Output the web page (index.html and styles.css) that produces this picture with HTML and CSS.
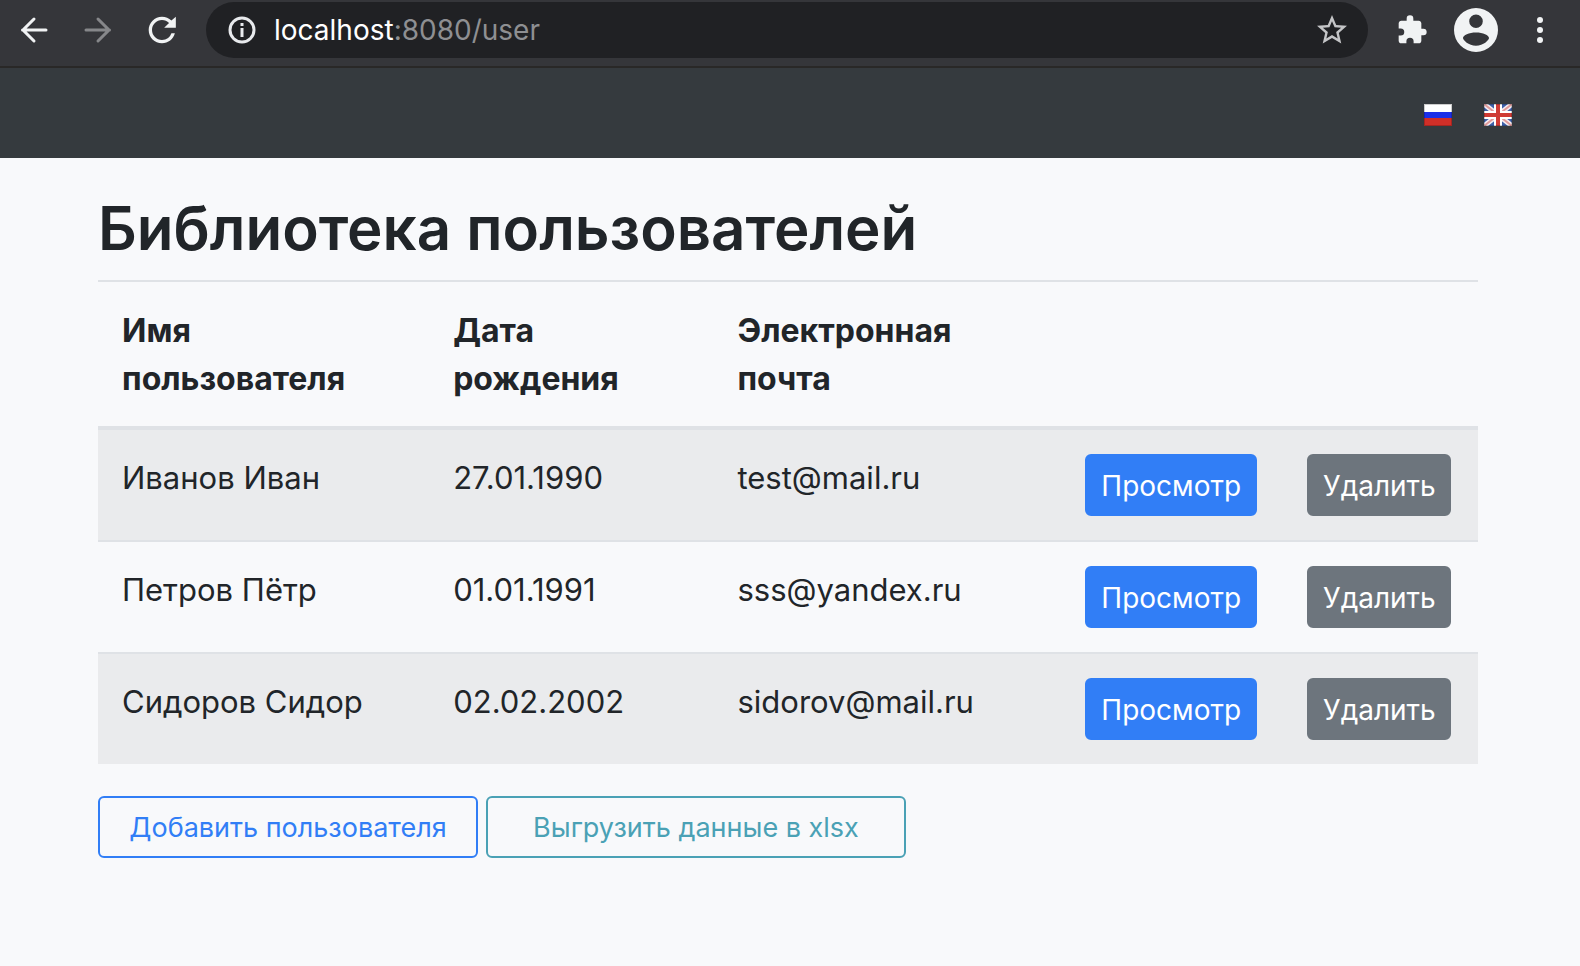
FILE: index.html
```html
<!DOCTYPE html>
<html lang="ru">
<head>
<meta charset="utf-8">
<title>Библиотека пользователей</title>
<link rel="stylesheet" href="styles.css">
</head>
<body>
<header class="toolbar">
  <div class="tools">
    <button class="tool" type="button" aria-label="Назад">
      <svg width="28" height="28" viewBox="0 0 28 28"><path class="line" d="M26 14H2.500M14 3L3 14l11 11"/></svg>
    </button>
    <button class="tool tool-off" type="button" aria-label="Вперёд">
      <svg width="28" height="28" viewBox="0 0 28 28"><path class="line" d="M2 14h23.500M14 3l11 11-11 11"/></svg>
    </button>
    <button class="tool" type="button" aria-label="Обновить">
      <svg width="40" height="40" viewBox="0 0 24 24"><path d="M17.650 6.350A7.960 7.960 0 0 0 12 4c-4.420 0-7.990 3.580-7.990 8s3.570 8 7.990 8c3.730 0 6.840-2.550 7.730-6h-2.080A5.990 5.990 0 0 1 12 18c-3.310 0-6-2.690-6-6s2.690-6 6-6c1.660 0 3.140.69 4.220 1.780L13.300 10.700h7V4l-2.650 2.350z"/></svg>
    </button>
  </div>
  <div class="omnibox">
    <svg width="28" height="28" viewBox="0 0 28 28" aria-hidden="true"><circle class="ring" cx="14" cy="14" r="12"/><path d="M12.500 7h3v3h-3zM12.500 12h3v9h-3z"/></svg>
    <div class="url">localhost<span class="url-rest">:8080/user</span></div>
    <button class="star" type="button" aria-label="В закладки">
      <svg width="36" height="36" viewBox="0 0 24 24"><path d="M22 9.240l-7.190-.62L12 2 9.190 8.630 2 9.240l5.460 4.730L5.820 21 12 17.270 18.180 21l-1.630-7.030L22 9.240zM12 15.400l-3.760 2.270 1-4.280-3.320-2.880 4.380-.38L12 6.100l1.710 4.040 4.380.38-3.320 2.880 1 4.280L12 15.400z"/></svg>
    </button>
  </div>
  <div class="tools">
    <button class="tool" type="button" aria-label="Расширения">
      <svg width="32" height="32" viewBox="0 0 24 24"><path d="M20.500 11H19V7c0-1.100-.9-2-2-2h-4V3.500a2.500 2.500 0 0 0-5 0V5H4c-1.100 0-1.990.9-1.990 2v3.800H3.500a2.700 2.700 0 0 1 0 5.400H2V20c0 1.100.9 2 2 2h3.800v-1.500a2.700 2.700 0 0 1 5.400 0V22H17c1.100 0 2-.9 2-2v-4h1.500a2.500 2.500 0 0 0 0-5z"/></svg>
    </button>
    <button class="tool" type="button" aria-label="Профиль">
      <svg width="44" height="44" viewBox="0 0 44 44"><path fill-rule="evenodd" d="M22 0a22 22 0 1 0 0 44 22 22 0 0 0 0-44zM22 6.500a6.800 6.800 0 1 1 0 13.600 6.800 6.800 0 0 1 0-13.600zM22 24.500c7 0 13 2.500 13 5.500 0 2-5.500 7.800-13 7.800S9 32 9 30c0-3 6-5.500 13-5.500z"/></svg>
    </button>
    <button class="tool" type="button" aria-label="Меню">
      <svg width="28" height="28" viewBox="0 0 28 28"><circle cx="14" cy="4" r="3"/><circle cx="14" cy="14" r="3"/><circle cx="14" cy="24" r="3"/></svg>
    </button>
  </div>
</header>

<nav class="navbar">
  <a class="flag" href="?lang=ru" aria-label="Русский">
    <svg width="28" height="22" viewBox="0 0 28 22"><path fill="#fff" d="M0 0h28v8H0z"/><path fill="#1b2fe8" d="M0 8h28v6H0z"/><path fill="#d02f28" d="M0 14h28v8H0z"/><path fill="none" stroke="#000" stroke-opacity=".2" stroke-width="2" d="M0 0h28v22H0z"/></svg>
  </a>
  <a class="flag" href="?lang=en" aria-label="English">
    <svg width="28" height="22" viewBox="0 0 28 22"><path fill="#3c5fa8" d="M0 0h28v22H0z"/><path stroke="#f4eef2" stroke-width="5" d="M0 0l28 22M28 0L0 22"/><path stroke="#e09a9a" stroke-width="2" d="M0 0l28 22M28 0L0 22"/><path stroke="#fff" stroke-width="8" d="M14 0v22M0 11h28"/><path stroke="#cf3b35" stroke-width="4" d="M14 0v22M0 11h28"/><path fill="none" stroke="#000" stroke-opacity=".2" stroke-width="2" d="M0 0h28v22H0z"/></svg>
  </a>
</nav>

<main class="container">
  <h1 class="title">Библиотека пользователей</h1>
  <table class="users">
    <colgroup><col class="col-name"><col class="col-date"><col class="col-mail"><col class="col-view"><col class="col-drop"></colgroup>
    <thead>
      <tr><th scope="col">Имя<br>пользователя</th><th scope="col">Дата<br>рождения</th><th scope="col">Электронная<br>почта</th><td></td><td></td></tr>
    </thead>
    <tbody>
      <tr><td>Иванов Иван</td><td>27.01.1990</td><td>test@mail.ru</td><td><button class="btn btn-primary" type="button">Просмотр</button></td><td><button class="btn btn-secondary" type="button">Удалить</button></td></tr>
      <tr><td>Петров Пётр</td><td>01.01.1991</td><td>sss@yandex.ru</td><td><button class="btn btn-primary" type="button">Просмотр</button></td><td><button class="btn btn-secondary" type="button">Удалить</button></td></tr>
      <tr><td>Сидоров Сидор</td><td>02.02.2002</td><td>sidorov@mail.ru</td><td><button class="btn btn-primary" type="button">Просмотр</button></td><td><button class="btn btn-secondary" type="button">Удалить</button></td></tr>
    </tbody>
  </table>
  <div class="actions">
    <button class="btn btn-add" type="button">Добавить пользователя</button>
    <button class="btn btn-export" type="button">Выгрузить данные в xlsx</button>
  </div>
</main>
</body>
</html>
```
FILE: styles.css
```css
* { box-sizing: border-box; }

body {
  margin: 0;
  background: #f8f9fb;
  color: #212529;
  font-family: Inter, "Liberation Sans", sans-serif;
  font-size: 31px;
  line-height: 48px;
}

button { font: inherit; cursor: pointer; }
svg { display: block; }

.toolbar {
  display: flex;
  gap: 12px;
  padding: 2px 8px 8px 2px;
  background: #35363a;
  border-bottom: 2px solid #292827;
}

.tools { display: flex; }

.tool, .star {
  display: flex;
  align-items: center;
  justify-content: center;
  padding: 0;
  border: 0;
  background: none;
  fill: #f1f3f4;
  stroke: none;
}

.tool { width: 64px; height: 56px; }
.line { fill: none; stroke: #f1f3f4; stroke-width: 3; stroke-linecap: round; }
.tool-off .line { stroke: #86878a; }

.omnibox {
  flex: 1;
  display: flex;
  align-items: center;
  gap: 18px;
  height: 56px;
  padding: 0 18px 0 22px;
  border-radius: 28px;
  background: #202124;
  fill: #e8eaed;
}

.ring { fill: none; stroke: #e8eaed; stroke-width: 3; }
.url { flex: 1; color: #fff; font-size: 28px; }
.url-rest { color: #8e8f92; }
.star { fill: #c4c5c7; }

.navbar {
  display: flex;
  align-items: center;
  justify-content: flex-end;
  gap: 32px;
  height: 90px;
  padding: 4px 68px 0;
  background: #353a3e;
}

.container { padding: 32px 102px 32px 98px; }

.title {
  margin: 0 0 14px;
  font-size: 60px;
  font-weight: 600;
  line-height: 76px;
}

.users {
  width: 100%;
  table-layout: fixed;
  border-spacing: 0;
}

.col-name { width: 24%; }
.col-date { width: 20.6%; }
.col-mail { width: 25.2%; }
.col-view { width: 16.1%; }
.col-drop { width: 14.1%; }

.users th, .users td {
  padding: 24px;
  border-top: 2px solid #dfe2e6;
  text-align: left;
  vertical-align: top;
  white-space: nowrap;
}

.users thead th, .users thead td { border-bottom: 4px solid #dfe2e6; }
.users th { padding: 25px 24px 23px; font-size: 32px; font-weight: 700; }
.users tbody tr:first-child td { border-top: 0; }
.users tbody tr:nth-child(odd) { background: #eaebed; }

.btn {
  display: block;
  height: 62px;
  padding: 2px 0 0;
  border: 2px solid;
  border-radius: 6px;
  background: none;
  font-size: 28px;
  line-height: 42px;
  white-space: nowrap;
}

.btn-primary { width: 172px; border-color: #317ef6; background: #317ef6; color: #fff; }
.btn-secondary { width: 144px; border-color: #6d757d; background: #6d757d; color: #fff; }
.btn-add { width: 380px; border-color: #317ef6; color: #317ef6; }
.btn-export { width: 420px; border-color: #4aa1b5; color: #4aa1b5; }

.actions { display: flex; gap: 8px; margin-top: 32px; }
.actions .btn { font-size: 27px; }
```
